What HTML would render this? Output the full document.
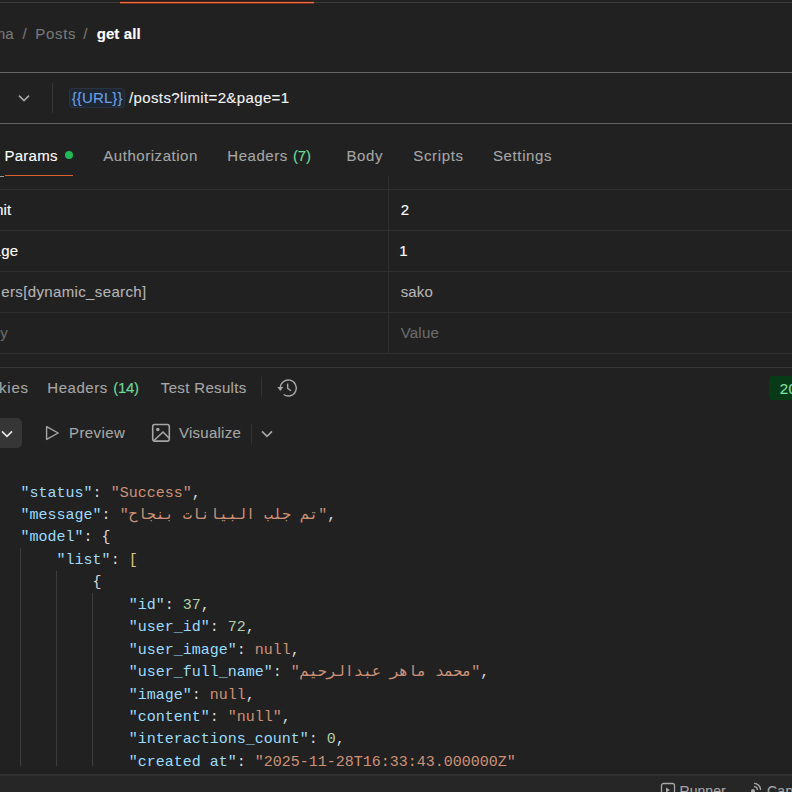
<!DOCTYPE html>
<html lang="en"><head><meta charset="utf-8"><title>Postman</title>
<style>
html,body{margin:0;padding:0;background:#212121;}
body{width:792px;height:792px;position:relative;overflow:hidden;font-family:"Liberation Sans","Noto Sans CJK SC",sans-serif;color:#a6a6a6;}
.abs{position:absolute;white-space:nowrap;}
.hl{position:absolute;left:0;width:792px;height:1px;background:#3a3a3a;}
.t{position:absolute;white-space:nowrap;font-size:15px;line-height:20px;color:#a6a6a6;-webkit-text-stroke:0.12px currentColor;}
.codewrap{position:absolute;left:0;top:470px;width:792px;height:295.5px;overflow:hidden;}
.code{position:absolute;left:20.6px;top:12.6px;font-family:"Liberation Mono","DejaVu Sans Mono",monospace;font-size:15px;line-height:22.43px;color:#d8d8d8;white-space:pre;}
.k{color:#9cdcfe}.s{color:#ce9178}.n{color:#b5cea8}.y{color:#e0c48a}
.guide{position:absolute;width:1px;background:#3c3c3c;}
</style></head><body>

<!-- top tab strip -->
<div class="hl" style="top:2px;background:#3a3a3a"></div>
<div class="abs" style="left:119.7px;top:2px;width:194.3px;height:1px;background:#ee6f42"></div>
<div class="abs" style="left:119.7px;top:3px;width:194.3px;height:1px;background:#75301a"></div>
<div class="abs" style="left:119.7px;top:1px;width:194.3px;height:1px;background:#4a2418"></div>

<!-- URL bar -->
<div class="hl" style="top:72px;background:#646464"></div>
<div class="hl" style="top:123px;background:#646464"></div>
<svg class="abs" style="left:15.7px;top:90.4px" width="16" height="16" viewBox="0 0 16 16"><path d="M3 5.6 L8 10.6 L13 5.6" fill="none" stroke="#a6a6a6" stroke-width="1.7"/></svg>
<div class="abs" style="left:52px;top:82.5px;width:1px;height:30px;background:#363636"></div>
<div class="abs" style="left:68.7px;top:87.5px;width:56.3px;height:20.5px;background:#1e2631;border-radius:4px;box-shadow:inset 0 0 0 1px #2a333f"></div>

<!-- request tabs -->
<div class="abs" style="left:65.1px;top:151.4px;width:8px;height:8px;border-radius:50%;background:#1fb856"></div>
<div class="abs" style="left:5px;top:174.5px;width:68.2px;height:1.3px;background:#e0602f"></div>
<div class="abs" style="left:0;top:176px;width:3.5px;height:1px;background:#9a9a9a"></div>

<!-- table -->
<div class="hl" style="top:189px;background:#2f2f2f"></div>
<div class="hl" style="top:230px;background:#2f2f2f"></div>
<div class="hl" style="top:271px;background:#2f2f2f"></div>
<div class="hl" style="top:312px;background:#2f2f2f"></div>
<div class="hl" style="top:353px;background:#2f2f2f"></div>
<div class="abs" style="left:388px;top:176px;width:1px;height:177px;background:#2f2f2f"></div>

<!-- pane separator -->
<div class="hl" style="top:367px;background:#363636"></div>

<!-- response tabs -->
<div class="abs" style="left:261px;top:377px;width:1px;height:19.5px;background:#313131"></div>
<svg class="abs" style="left:276px;top:377px" width="22" height="22" viewBox="0 0 22 22"><g fill="none" stroke="#a6a6a6" stroke-width="1.4"><path d="M4.3 11 A8 8 0 1 1 7.7 17.55"/><path d="M11.7 6.6 V11.3 L15 13.7"/></g><path d="M1.3 10 L7.3 10 L4.3 13.9 Z" fill="#a6a6a6"/></svg>
<div class="abs" style="left:768.7px;top:376px;width:30px;height:24px;background:#083a17;border-radius:4px"></div>

<!-- toolbar -->
<div class="abs" style="left:-8px;top:417.5px;width:29.7px;height:30.5px;background:#363636;border-radius:5px"></div>
<svg class="abs" style="left:-0.8px;top:425.5px" width="16" height="16" viewBox="0 0 16 16"><path d="M3 5.4 L8 10.4 L13 5.4" fill="none" stroke="#e6e6e6" stroke-width="1.6"/></svg>
<svg class="abs" style="left:44px;top:424px" width="18" height="18" viewBox="0 0 18 18"><path d="M2.6 2.6 L14.2 9 L2.6 15.4 Z" fill="none" stroke="#a6a6a6" stroke-width="1.4" stroke-linejoin="round"/></svg>
<svg class="abs" style="left:151px;top:423px" width="20" height="20" viewBox="0 0 20 20"><g fill="none" stroke="#a6a6a6" stroke-width="1.6"><rect x="1.7" y="1.5" width="16.6" height="16.6" rx="2"/><circle cx="6.8" cy="6.5" r="1" fill="#a6a6a6"/><path d="M3 17.5 L12 9 L18 15"/></g></svg>
<div class="abs" style="left:251px;top:423.5px;width:1px;height:20.5px;background:#313131"></div>
<svg class="abs" style="left:258.8px;top:425.5px" width="16" height="16" viewBox="0 0 16 16"><path d="M3 5.4 L8 10.4 L13 5.4" fill="none" stroke="#a6a6a6" stroke-width="1.7"/></svg>

<!-- code -->
<div class="codewrap">
<div class="guide" style="left:20px;top:78px;height:226px"></div>
<div class="guide" style="left:56px;top:101px;height:204px"></div>
<div class="guide" style="left:92px;top:123px;height:181px"></div>
<div class="code" id="code"><span class="k">"status"</span>: <span class="s">"Success"</span>,
<span class="k">"message"</span>: <span class="s">"تم جلب البيانات بنجاح"</span>,
<span class="k">"model"</span>: {
    <span class="k">"list"</span>: <span class="y">[</span>
        {
            <span class="k">"id"</span>: <span class="n">37</span>,
            <span class="k">"user_id"</span>: <span class="n">72</span>,
            <span class="k">"user_image"</span>: <span class="s">null</span>,
            <span class="k">"user_full_name"</span>: <span class="s">"محمد ماهر عبدالرحيم"</span>,
            <span class="k">"image"</span>: <span class="s">null</span>,
            <span class="k">"content"</span>: <span class="s">"null"</span>,
            <span class="k">"interactions_count"</span>: <span class="n">0</span>,
            <span class="k">"created_at"</span>: <span class="s">"2025-11-28T16:33:43.000000Z"</span></div>
</div>

<!-- status bar -->
<div class="abs" style="left:0;top:773.8px;width:792px;height:19px;background:#262626;border-top:2px solid #303030"></div>
<svg class="abs" style="left:659.5px;top:782.1px" width="16" height="16" viewBox="0 0 16 16"><rect x="1.5" y="1.5" width="13" height="13" rx="2" fill="none" stroke="#a6a6a6" stroke-width="1.3"/><path d="M6 5.5 L10 8 L6 10.5 Z" fill="#a6a6a6"/></svg>
<svg class="abs" style="left:745.2px;top:781.2px" width="18" height="18" viewBox="0 0 18 18"><g fill="none" stroke="#a6a6a6" stroke-width="1.4"><path d="M9 2.4 A6.6 6.6 0 0 1 15.6 9"/><path d="M9 5.6 A3.4 3.4 0 0 1 12.4 9"/></g><circle cx="8" cy="10" r="2" fill="#a6a6a6"/><path d="M2 16 L6.5 11.5" stroke="#a6a6a6" stroke-width="1.6"/></svg>

<div class="t" style="left:-7.15px;top:23.80px;color:#787878;">ma</div>
<div class="t" style="left:22.60px;top:23.80px;color:#787878;">/</div>
<div class="t" style="left:35.30px;top:23.80px;color:#787878;letter-spacing:0.671px;">Posts</div>
<div class="t" style="left:83.25px;top:23.80px;color:#787878;">/</div>
<div class="t" style="left:96.70px;top:23.80px;color:#ffffff;letter-spacing:0.087px;font-weight:bold;">get all</div>
<div class="t" style="left:71.70px;top:87.80px;color:#6a9fe3;letter-spacing:0.127px;">{{URL}}</div>
<div class="t" style="left:129.00px;top:87.80px;color:#f2f2f2;letter-spacing:0.375px;">/posts?limit=2&amp;page=1</div>
<div class="t" style="left:4.40px;top:146.10px;color:#ffffff;letter-spacing:0.284px;">Params</div>
<div class="t" style="left:103.30px;top:146.10px;color:#a6a6a6;letter-spacing:0.541px;">Authorization</div>
<div class="t" style="left:227.30px;top:146.10px;color:#a6a6a6;letter-spacing:0.534px;">Headers</div>
<div class="t" style="left:293.00px;top:146.10px;color:#6bdd9a;letter-spacing:-0.169px;">(7)</div>
<div class="t" style="left:346.50px;top:146.10px;color:#a6a6a6;letter-spacing:0.604px;">Body</div>
<div class="t" style="left:413.30px;top:146.10px;color:#a6a6a6;letter-spacing:0.643px;">Scripts</div>
<div class="t" style="left:493.00px;top:146.10px;color:#a6a6a6;letter-spacing:0.614px;">Settings</div>
<div class="t" style="left:-15.56px;top:200.10px;color:#ffffff;">limit</div>
<div class="t" style="left:-16.18px;top:241.30px;color:#ffffff;"><span style="margin-right:0.8px">pa</span>ge</div>
<div class="t" style="left:1.30px;top:282.20px;color:#b4b4b4;letter-spacing:0.360px;">ers[dynamic_search]</div>
<div class="t" style="left:-18.15px;top:323.30px;color:#6b6b6b;">Key</div>
<div class="t" style="left:400.70px;top:200.10px;color:#ffffff;">2</div>
<div class="t" style="left:399.35px;top:241.30px;color:#ffffff;">1</div>
<div class="t" style="left:400.70px;top:282.20px;color:#b4b4b4;letter-spacing:0.153px;">sako</div>
<div class="t" style="left:400.70px;top:323.30px;color:#6b6b6b;letter-spacing:0.223px;">Value</div>
<div class="t" style="left:-30.84px;top:377.80px;color:#a6a6a6;letter-spacing:0.775px;">Cookies</div>
<div class="t" style="left:47.30px;top:377.80px;color:#a6a6a6;letter-spacing:0.534px;">Headers</div>
<div class="t" style="left:113.30px;top:377.80px;color:#6bdd9a;letter-spacing:-0.327px;">(14)</div>
<div class="t" style="left:160.80px;top:377.80px;color:#a6a6a6;letter-spacing:0.346px;">Test Results</div>
<div class="t" style="left:779.70px;top:379.20px;color:#7ee2a8;letter-spacing:0.400px;">200 OK</div>
<div class="t" style="left:69.00px;top:422.80px;color:#a6a6a6;letter-spacing:0.414px;">Preview</div>
<div class="t" style="left:179.00px;top:422.80px;color:#a6a6a6;letter-spacing:0.248px;">Visualize</div>
<div class="t" style="left:679.50px;top:780.85px;color:#a6a6a6;letter-spacing:0.049px;font-size:14px;">Runner</div>
<div class="t" style="left:767.00px;top:780.85px;color:#a6a6a6;letter-spacing:0.250px;font-size:14px;">Capture requests</div>
</body></html>
